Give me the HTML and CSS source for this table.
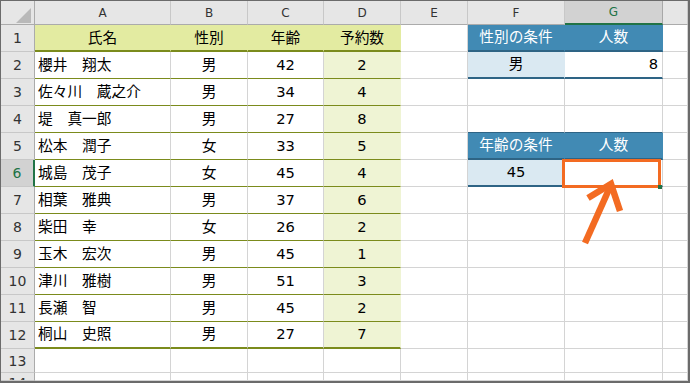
FILE: index.html
```html
<!DOCTYPE html>
<html lang="ja">
<head>
<meta charset="utf-8">
<title>Sheet</title>
<link rel="stylesheet" href="styles.css">
</head>
<body>
<div class="sheet">
  <div class="corner"><span class="tri"></span></div>
  <div class="ch">A</div>
  <div class="ch">B</div>
  <div class="ch">C</div>
  <div class="ch">D</div>
  <div class="ch">E</div>
  <div class="ch">F</div>
  <div class="ch sel">G</div>
  <div class="ch"></div>

  <div class="rh">1</div>
  <div class="th">氏名</div>
  <div class="th">性別</div>
  <div class="th">年齢</div>
  <div class="th">予約数</div>
  <div class="cell"></div>
  <div class="bh">性別の条件</div>
  <div class="bh">人数</div>
  <div class="cell"></div>

  <div class="rh">2</div>
  <div class="td name">櫻井　翔太</div>
  <div class="td">男</div>
  <div class="td">42</div>
  <div class="td fill">2</div>
  <div class="cell"></div>
  <div class="bd">男</div>
  <div class="bd2">8</div>
  <div class="cell"></div>

  <div class="rh">3</div>
  <div class="td name">佐々川　蔵之介</div>
  <div class="td">男</div>
  <div class="td">34</div>
  <div class="td fill">4</div>
  <div class="cell"></div>
  <div class="cell"></div>
  <div class="cell"></div>
  <div class="cell"></div>

  <div class="rh">4</div>
  <div class="td name">堤　真一郎</div>
  <div class="td">男</div>
  <div class="td">27</div>
  <div class="td fill">8</div>
  <div class="cell"></div>
  <div class="cell bt"></div>
  <div class="cell bt"></div>
  <div class="cell"></div>

  <div class="rh">5</div>
  <div class="td name">松本　潤子</div>
  <div class="td">女</div>
  <div class="td">33</div>
  <div class="td fill">5</div>
  <div class="cell"></div>
  <div class="bh">年齢の条件</div>
  <div class="bh">人数</div>
  <div class="cell"></div>

  <div class="rh sel">6</div>
  <div class="td name">城島　茂子</div>
  <div class="td">女</div>
  <div class="td">45</div>
  <div class="td fill">4</div>
  <div class="cell"></div>
  <div class="bd">45</div>
  <div class="bd2"></div>
  <div class="cell"></div>

  <div class="rh">7</div>
  <div class="td name">相葉　雅典</div>
  <div class="td">男</div>
  <div class="td">37</div>
  <div class="td fill">6</div>
  <div class="cell"></div>
  <div class="cell"></div>
  <div class="cell"></div>
  <div class="cell"></div>

  <div class="rh">8</div>
  <div class="td name">柴田　幸</div>
  <div class="td">女</div>
  <div class="td">26</div>
  <div class="td fill">2</div>
  <div class="cell"></div>
  <div class="cell"></div>
  <div class="cell"></div>
  <div class="cell"></div>

  <div class="rh">9</div>
  <div class="td name">玉木　宏次</div>
  <div class="td">男</div>
  <div class="td">45</div>
  <div class="td fill">1</div>
  <div class="cell"></div>
  <div class="cell"></div>
  <div class="cell"></div>
  <div class="cell"></div>

  <div class="rh">10</div>
  <div class="td name">津川　雅樹</div>
  <div class="td">男</div>
  <div class="td">51</div>
  <div class="td fill">3</div>
  <div class="cell"></div>
  <div class="cell"></div>
  <div class="cell"></div>
  <div class="cell"></div>

  <div class="rh">11</div>
  <div class="td name">長瀬　智</div>
  <div class="td">男</div>
  <div class="td">45</div>
  <div class="td fill">2</div>
  <div class="cell"></div>
  <div class="cell"></div>
  <div class="cell"></div>
  <div class="cell"></div>

  <div class="rh">12</div>
  <div class="td name last">桐山　史照</div>
  <div class="td last">男</div>
  <div class="td last">27</div>
  <div class="td fill last">7</div>
  <div class="cell"></div>
  <div class="cell"></div>
  <div class="cell"></div>
  <div class="cell"></div>

  <div class="rh">13</div>
  <div class="cell"></div>
  <div class="cell"></div>
  <div class="cell"></div>
  <div class="cell"></div>
  <div class="cell"></div>
  <div class="cell"></div>
  <div class="cell"></div>
  <div class="cell"></div>

  <div class="rh cut">14</div>
  <div class="cell"></div>
  <div class="cell"></div>
  <div class="cell"></div>
  <div class="cell"></div>
  <div class="cell"></div>
  <div class="cell"></div>
  <div class="cell"></div>
  <div class="cell"></div>

  <div class="active"></div>
  <div class="handle"></div>
  <svg class="arrow" width="690" height="383" viewBox="0 0 690 383">
    <line x1="585" y1="243" x2="610" y2="187" />
    <polyline points="588,198 611,184 620,211" />
  </svg>
</div>
</body>
</html>
```

FILE: styles.css
```css
* {
  box-sizing: border-box;
  margin: 0;
  padding: 0;
}

html,
body {
  width: 690px;
  height: 383px;
  overflow: hidden;
  background: #ffffff;
}

body {
  font-family: "DejaVu Sans", "Noto Sans CJK JP", sans-serif;
  color: #000000;
}

.sheet {
  position: relative;
  width: 690px;
  height: 383px;
  border-top: 1px solid #6b6b6b;
  border-left: 1px solid #6b6b6b;
  border-right: 2px solid #6b6b6b;
  border-bottom: 2px solid #6b6b6b;
  display: grid;
  grid-template-columns: 34px 136px 77px 76px 77px 67px 97px 98px 25px;
  grid-template-rows: 24px repeat(12, 27px) 24px 8px;
  overflow: hidden;
}

.sheet > div {
  display: flex;
  align-items: center;
  justify-content: center;
  font-size: 14.7px;
  line-height: 1;
  white-space: nowrap;
  overflow: hidden;
}

/* corner */
.corner {
  background: #e6e6e6;
  border-right: 1px solid #ababab;
  border-bottom: 1px solid #ababab;
  justify-content: flex-end !important;
  align-items: flex-end !important;
  padding: 0 3px 1px 0;
}

.tri {
  display: block;
  width: 15px;
  height: 15px;
  background: #b9b9b9;
  clip-path: polygon(100% 0, 100% 100%, 0 100%);
}

/* column headers */
.ch {
  background: #e6e6e6;
  color: #333333;
  font-size: 12px !important;
  border-right: 1px solid #c8c8c8;
  border-bottom: 1px solid #ababab;
}

.ch.sel {
  background: #d2d2d2;
  color: #217346;
  border-right-color: #a8a8a8;
  border-bottom: 2px solid #217346;
}

/* row headers */
.rh {
  background: #e6e6e6;
  color: #333333;
  font-size: 14px !important;
  border-right: 1px solid #ababab;
  border-bottom: 1px solid #c8c8c8;
}

.rh.sel {
  background: #d2d2d2;
  color: #217346;
  border-right: 2px solid #217346;
}

.rh.cut {
  align-items: flex-start !important;
  padding-top: 3px;
}

/* plain cells */
.cell {
  border-right: 1px solid #d4d4d4;
  border-bottom: 1px solid #d4d4d4;
}

.cell.bt {
  border-bottom: 1px solid #2e6485;
}

/* green table */
.th {
  background: #e3eba1;
  border-right: 1px solid #e3eba1;
  border-bottom: 2px solid #7b8b1c;
  padding-top: 1px;
}

.td {
  border-right: 1px solid #d4d4d4;
  border-bottom: 1px solid #7b8b1c;
}

.td.name {
  justify-content: flex-start !important;
  padding-left: 3px;
}

.td.fill {
  background: #eff4d4;
  border-right-color: #eff4d4;
}

.td.last {
  border-bottom: 2px solid #7b8b1c;
}

/* blue tables */
.bh {
  background: #418ab4;
  color: #ffffff;
  border-right: 1px solid #418ab4;
  border-bottom: 2px solid #2e6485;
}

.bd {
  background: #dae9f2;
  border-right: 1px solid #dae9f2;
  border-bottom: 2px solid #2e6485;
}

.bd2 {
  justify-content: flex-end !important;
  padding-right: 4px;
  border-right: 1px solid #d4d4d4;
  border-bottom: 2px solid #2e6485;
}

/* annotation overlays */
.active {
  position: absolute;
  left: 561px;
  top: 158px;
  width: 99px;
  height: 29px;
  border: 3px solid #f36b22;
}

.handle {
  position: absolute;
  left: 657px;
  top: 184px;
  width: 4px;
  height: 4px;
  background: #217346;
}

.arrow {
  position: absolute;
  left: -1px;
  top: -1px;
  fill: none;
  stroke: #f36b22;
  stroke-width: 6.5;
  stroke-linejoin: miter;
  stroke-linecap: butt;
  pointer-events: none;
}
```
